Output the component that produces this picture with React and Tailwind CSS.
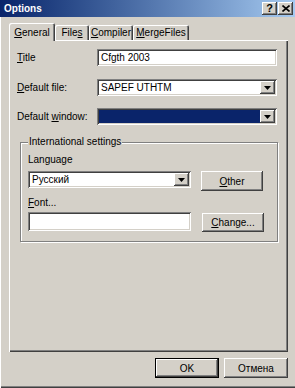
import React from "react";

const sunken =
  "shadow-[inset_1px_1px_0_#808080,inset_-1px_-1px_0_#ffffff,inset_2px_2px_0_#404040,inset_-2px_-2px_0_#d4d0c8]";
const raised =
  "shadow-[inset_-1px_-1px_0_#404040,inset_1px_1px_0_#ffffff,inset_-2px_-2px_0_#808080,inset_2px_2px_0_#d4d0c8]";

const Arrow = () => (
  <svg width="7" height="4" viewBox="0 0 7 4">
    <path d="M0 0h7L3.5 4z" fill="#000" />
  </svg>
);

const Combo = ({ value, width, filled }) => (
  <div className={`flex h-[17px] bg-white p-[2px] ${sunken} ${width}`}>
    {filled ? (
      <div className="flex-1 bg-[#0a246a]" />
    ) : (
      <div className="flex-1 pl-[2px] leading-[13px] text-black">{value}</div>
    )}
    <div className={`flex h-[13px] w-[15px] items-center justify-center bg-[#d4d0c8] ${raised}`}>
      <Arrow />
    </div>
  </div>
);

const Button = ({ children, className = "", isDefault }) => (
  <div
    className={`flex items-center justify-center bg-[#d4d0c8] text-black ${
      isDefault ? "border border-black" : ""
    } ${className}`}
  >
    <div className={`flex h-full w-full items-center justify-center ${raised}`}>{children}</div>
  </div>
);

const Tab = ({ label, active, width }) => (
  <div
    className={`flex items-center justify-center bg-[#d4d0c8] shadow-[inset_1px_1px_0_#ffffff,inset_-1px_0_0_#404040,inset_-2px_0_0_#808080] rounded-t-[2px] ${width} ${
      active ? "relative z-10 -mb-[1px] h-[18px]" : "h-[15px]"
    }`}
  >
    {label}
  </div>
);

export default function App() {
  return (
    <div className="flex h-[388px] w-[295px] flex-col bg-[#d4d0c8] font-['Liberation_Sans',Arial,sans-serif] text-[10px] text-black shadow-[inset_1px_0_0_#ffffff,inset_0_-1px_0_#404040,inset_0_-2px_0_#808080]">
      {/* title bar */}
      <div className="flex h-[17px] items-center justify-between bg-gradient-to-r from-[#0a246a] to-[#a6caf0] pl-[4px] pr-[2px]">
        <span className="text-[10px] font-bold text-white">Options</span>
        <div className="flex gap-[1px]">
          <div className={`flex h-[13px] w-[15px] items-center justify-center bg-[#d4d0c8] text-[11px] font-bold leading-none ${raised}`}>
            ?
          </div>
          <div className={`flex h-[13px] w-[15px] items-center justify-center bg-[#d4d0c8] ${raised}`}>
            <svg width="8" height="7" viewBox="0 0 8 7">
              <path d="M0.5 0.5L7.5 6.5M7.5 0.5L0.5 6.5" stroke="#000" strokeWidth="1.6" />
            </svg>
          </div>
        </div>
      </div>

      {/* tabs */}
      <div className="mt-[6px] flex h-[17px] items-end pl-[9px]">
        <Tab active width="w-[46px]" label={<span><u>G</u>eneral</span>} />
        <Tab width="w-[34px]" label={<span>File<u>s</u></span>} />
        <Tab width="w-[44px]" label={<span><u>C</u>ompiler</span>} />
        <Tab width="w-[56px]" label={<span><u>M</u>ergeFiles</span>} />
      </div>

      {/* panel */}
      <div className="ml-[9px] h-[312px] w-[279px] shadow-[inset_1px_1px_0_#ffffff,inset_-1px_-1px_0_#404040,inset_-2px_-2px_0_#808080]">
        <div className="mt-[9px] flex h-[17px] items-center pl-[8px]">
          <span className="w-[80px]"><u>T</u>itle</span>
          <div className={`h-[17px] w-[180px] bg-white pl-[4px] leading-[17px] ${sunken}`}>Cfgth 2003</div>
        </div>
        <div className="mt-[13px] flex h-[17px] items-center pl-[8px]">
          <span className="w-[80px]"><u>D</u>efault file:</span>
          <Combo width="w-[180px]" value="SAPEF UTHTM" />
        </div>
        <div className="mt-[12px] flex h-[17px] items-center pl-[8px]">
          <span className="w-[80px]">Default <u>w</u>indow:</span>
          <Combo width="w-[180px]" filled />
        </div>

        {/* group box */}
        <div className="relative ml-[11px] mt-[17px] h-[100px] w-[258px] border border-[#808080] shadow-[inset_1px_1px_0_#ffffff,1px_1px_0_#ffffff]">
          <span className="absolute -top-[7px] left-[7px] bg-[#d4d0c8] px-[1px] leading-[12px]">
            International settings
          </span>
          <div className="pl-[7px]">
            <div className="mt-[11px] h-[12px] leading-[12px]">Language</div>
            <div className="mt-[5px] flex h-[20px] items-start">
              <Combo width="w-[163px]" value="Русский" />
              <Button className="ml-[10px] h-[20px] w-[62px]">
                <span><u>O</u>ther</span>
              </Button>
            </div>
            <div className="mt-[6px] h-[12px] leading-[12px]"><u>F</u>ont...</div>
            <div className="mt-[3px] flex items-start">
              <div className={`h-[19px] w-[163px] bg-white ${sunken}`} />
              <Button className="ml-[11px] mt-[1px] h-[19px] w-[62px]">
                <span><u>C</u>hange...</span>
              </Button>
            </div>
          </div>
        </div>
      </div>

      {/* bottom buttons */}
      <div className="mt-[6px] flex justify-end gap-[5px] pr-[7px]">
        <Button isDefault className="h-[20px] w-[64px]">OK</Button>
        <Button className="h-[20px] w-[64px]">Отмена</Button>
      </div>
    </div>
  );
}
